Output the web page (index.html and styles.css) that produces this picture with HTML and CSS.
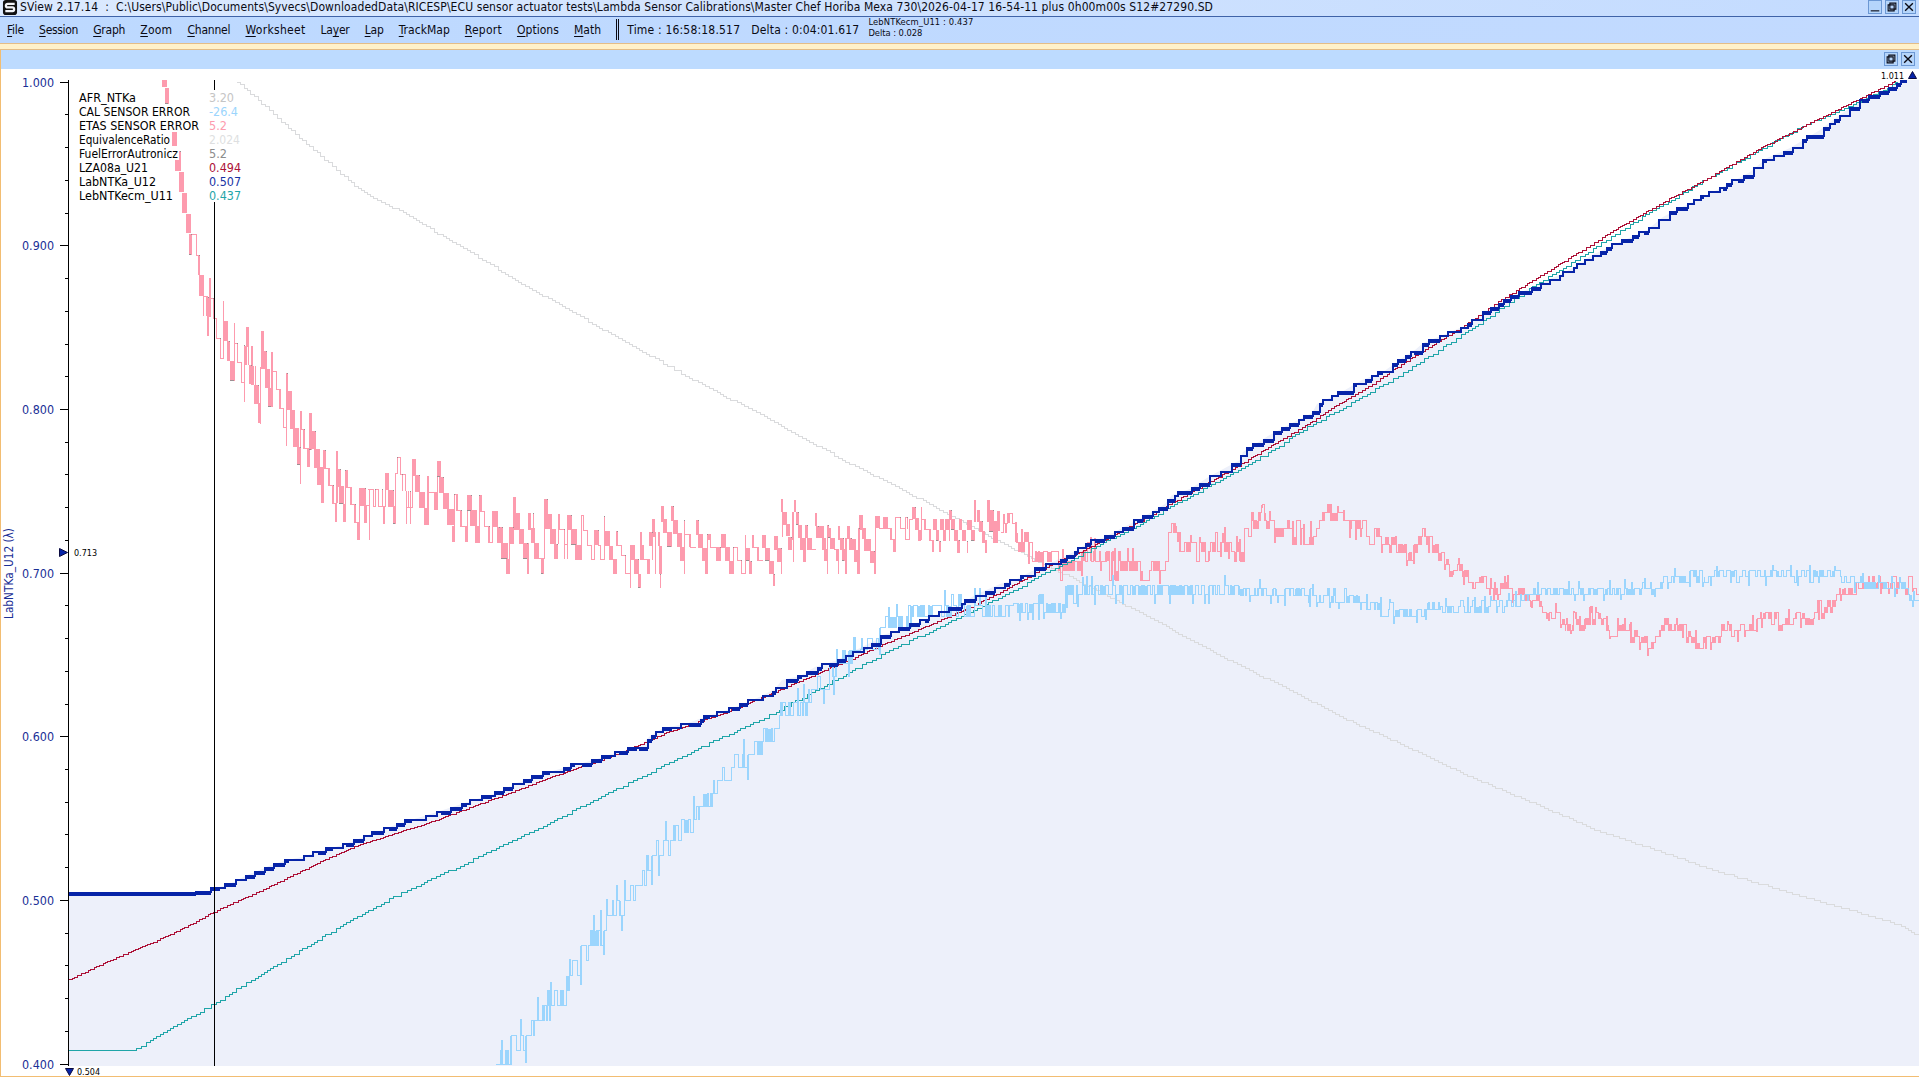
FILE: index.html
```html
<!DOCTYPE html>
<html lang="en">
<head>
<meta charset="utf-8">
<title>SView 2.17.14</title>
<link rel="stylesheet" href="styles.css">
</head>
<body>
<div class="app">
  <header class="titlebar">
    <svg class="logo" viewBox="0 0 16 16"><rect x="0.5" y="0" width="15" height="16" rx="3" fill="#111"/><path d="M13 4.2H5.6Q3.6 4.2 3.6 6T5.6 7.9H10.6Q12.4 7.9 12.4 9.8T10.6 11.8H3" fill="none" stroke="#f2f4f8" stroke-width="2.4"/></svg>
    <span class="title" data-width="1193">SView 2.17.14 &nbsp;: &nbsp;C:\Users\Public\Documents\Syvecs\DownloadedData\RICESP\ECU sensor actuator tests\Lambda Sensor Calibrations\Master Chef Horiba Mexa 730\2026-04-17 16-54-11 plus 0h00m00s S12#27290.SD</span>
    <div class="buttons">
      <svg class="btn" viewBox="0 0 14 14"><path d="M2 11.5H12"/></svg>
      <svg class="btn" viewBox="0 0 14 14"><path d="M4.5 2.5H11.5V9.5H4.5ZM2.5 4.5H9.5V11.5H2.5Z"/></svg>
      <svg class="btn" viewBox="0 0 14 14"><path class="cross" d="M2.5 2.5L11.5 11.5M11.5 2.5L2.5 11.5"/></svg>
    </div>
  </header>
  <nav class="menubar">
    <span class="item" data-width="17"><u>F</u>ile</span>
    <span class="item" data-width="39"><u>S</u>ession</span>
    <span class="item" data-width="32"><u>G</u>raph</span>
    <span class="item" data-width="32"><u>Z</u>oom</span>
    <span class="item" data-width="43"><u>C</u>hannel</span>
    <span class="item" data-width="60"><u>W</u>orksheet</span>
    <span class="item" data-width="29"><span>La</span><u>y</u>er</span>
    <span class="item" data-width="19"><u>L</u>ap</span>
    <span class="item" data-width="51"><u>T</u>rackMap</span>
    <span class="item" data-width="37"><u>R</u>eport</span>
    <span class="item" data-width="42"><u>O</u>ptions</span>
    <span class="item" data-width="27"><u>M</u>ath</span>
    <span class="divider"></span>
    <span class="readout" data-width="113">Time : 16:58:18.517</span>
    <span class="readout" data-width="108">Delta : 0:04:01.617</span>
    <span class="small"><span data-width="105">LebNTKecm_U11 : 0.437</span><span data-width="54">Delta : 0.028</span></span>
  </nav>
  <div class="rule"></div>
  <main class="panel">
    <div class="panelbar">
      <svg class="btn" viewBox="0 0 14 14"><path d="M4.5 2.5H11.5V9.5H4.5ZM2.5 4.5H9.5V11.5H2.5Z"/></svg>
      <svg class="btn" viewBox="0 0 14 14"><path class="cross" d="M2.5 2.5L11.5 11.5M11.5 2.5L2.5 11.5"/></svg>
    </div>
    <svg class="chart" id="chart" viewBox="1 69 1918 1007"></svg>
  </main>
</div>
<script src="chart.js"></script>
</body>
</html>
```
FILE: styles.css
```css
* { box-sizing: border-box; }
body { margin: 0; background: #fff; color: #0a0a14; font: 12px/14px "DejaVu Sans Condensed", "DejaVu Sans", sans-serif; font-stretch: condensed; }
.app { display: flex; flex-direction: column; width: 1919px; height: 1077px; overflow: hidden; }
.titlebar { display: flex; align-items: flex-start; height: 17px; padding: 0 3px 0 2px; border-bottom: 1px solid #3f63a8; background: linear-gradient(90deg, #dceaff, #cfe2fe 50%, #c3dbff); white-space: nowrap; }
.logo { width: 16px; height: 15px; flex: none; }
.title { margin-left: 2px; }
.buttons { display: flex; gap: 3px; margin-left: auto; }
.btn { width: 14px; height: 14px; flex: none; border: 1px solid #6c98d4; background: #b5d5fb; fill: none; stroke: #0a0a14; stroke-width: 1.3; }
.btn .cross { stroke-width: 1.6; }
.menubar { display: flex; height: 26px; padding: 6px 0 0 7px; gap: 15.1px; background: linear-gradient(90deg, #bdd9ff, #c2daff); white-space: nowrap; }
.item, .readout, .title { flex: none; }
.item u { text-underline-offset: 2px; }
.divider { width: 3px; height: 21px; margin-top: -4px; border: solid #0a0a14; border-width: 0 1px; }
.readout { margin-left: -7px; }
.readout + .readout { margin-left: -4px; }
.small { display: flex; flex-direction: column; margin: -6px 0 0 -6px; font-size: 9.3px; line-height: 10.5px; }
.small span { align-self: flex-start; }
[data-width] { display: inline-block; }
.rule { height: 7px; border: solid #e4bd87; border-width: 1px 0; background: #fff1c9; }
.panel { display: flex; flex-direction: column; flex: 1; border: solid #f2bd72; border-width: 0 0 1px 1px; }
.panelbar { display: flex; justify-content: flex-end; gap: 3px; height: 19px; padding: 2px 4px 0; background: #bddbff; }
.chart { display: block; width: 1918px; height: 1007px; }
.label { font: 12px "DejaVu Sans Condensed", "DejaVu Sans", sans-serif; font-stretch: condensed; }
.tiny { font-size: 9.5px; }
.scale { font-size: 13px; fill: #1a2f96; }
```
FILE: chart.js
```js
const NS = "http://www.w3.org/2000/svg";
const chart = document.getElementById("chart");

function el(name, attrs, text) {
  const node = document.createElementNS(NS, name);
  for (const k in attrs) node.setAttribute(k, attrs[k]);
  if (text) node.textContent = text;
  chart.appendChild(node);
  return node;
}
let seed = 7;
const rnd = () => (seed = (seed * 16807) % 2147483647) / 2147483647;
const parse = s => s.trim().split(/\s+/).map(p => p.split(",").map(Number));
// Points recorded on a 3x grid, relative to a region's origin
const region = (ox, oy, s) => parse(s).map(([x, y]) => [ox + x / 3, oy + y / 3]);

function at(pts, x) {
  for (let i = 1; i < pts.length; i++) {
    if (x <= pts[i][0]) {
      const [a, b] = pts[i - 1], [c, d] = pts[i];
      return b + (d - b) * (x - a) / (c - a || 1);
    }
  }
  return pts[pts.length - 1][1];
}

function staircase(pts, q, hold) {
  const end = pts[pts.length - 1][0];
  let x = pts[0][0], y = Math.round(at(pts, x) / q) * q, d = `M${x} ${y + .5}`;
  while (x < end) {
    x = Math.min(end, x + hold());
    const n = Math.round(at(pts, x) / q) * q;
    d += `H${x + .5}`;
    if (n !== y) d += `V${n + .5}`;
    y = n;
  }
  return d;
}

const navy = parse(`69,894 192,894 208,892 210,890 223,886 234,882 245,876 260,870 271,865 287,860 302,857 345,844 395,825 440,811 480,798 500,792 514,784 545,773 567,767 594,760 615,753 640,746 650,736 663,728 685,724 708,716 733,708 757,698 775,689 782,680 800,676 815,667 838,660 847,654 860,648 876,640 883,635 905,628 933,616 960,605 975,595 1000,584 1017,579 1030,572 1048,564 1068,555 1088,543 1105,537 1128,525 1143,517 1165,504 1172,495 1190,489 1210,476 1240,460 1243,452 1268,436 1290,424 1312,413 1317,404 1340,393 1362,380 1383,372 1405,356 1415,350 1423,343 1448,333 1467,325 1483,313 1503,301 1530,288 1557,276 1582,263 1590,256 1620,242 1647,230 1663,217 1680,208 1717,190 1750,172 1767,158 1790,148 1820,130 1837,117 1863,99 1888,88 1902,80`);
const red = parse(`69,979 110,960 150,943 185,927 214,911 265,888 323,860 355,846 379,838 435,820 500,796 550,777 600,760 640,744 667,732 717,715 767,695 817,673 850,659 883,644 933,623 967,608 1000,592 1043,568 1100,542 1143,519 1167,505 1200,487 1240,464 1310,422 1333,407 1367,387 1407,360 1460,328 1503,298 1567,259 1610,232 1657,205 1703,180 1760,148 1800,127 1850,103 1895,80`);
const teal = parse(`69,1049 135,1049 146,1042 167,1030 214,1003 250,980 290,956 323,936 350,920 400,893 450,870 500,846 543,825 590,802 643,775 700,747 767,716 802,697 858,667 900,645 953,620 1000,597 1050,570 1073,558 1150,518 1200,490 1233,472 1267,453 1310,425 1343,407 1390,380 1413,366 1450,342 1483,320 1507,303 1535,285 1567,265 1600,243 1633,222 1667,202 1700,182 1760,149 1800,127 1850,105 1888,88 1897,81`);
const ratio = parse(`237,81 263,105 300,138 340,173 357,188 373,197 407,215 437,233 473,254 507,275 540,294 600,328 661,362 710,389 759,414 843,460 900,489 950,515 1000,542 1060,572 1100,592 1227,659 1346,719 1469,776 1591,828 1713,870 1836,906 1885,920 1900,925 1919,936`);

// Area under the bold trace
el("path", { d: `M69 894${navy.map(p => "L" + p).join("")}L1919 80V1066H69Z`, fill: "#edf0fa" });

const line = (d, stroke, w = 1) => el("path", { d, stroke, "stroke-width": w, fill: "none", "shape-rendering": "crispEdges" });
line(staircase(ratio, 2, () => 3 + Math.floor(rnd() * 2)), "#dadbdd");

// ETAS error: solid excursions as x0 x1 y0 y1
const barsA = `66 80 30 50;76 89 54 101;96 111 186 227;105 117 270 302;117 123 243 302;117 131 306 365;126 140 369 428;138 152 433 491;147 155 491 554;155 170 492 495;168 171 492 557;168 179 555 558;174 180 555 614;177 191 614 677;189 192 677 738;189 203 678 681;198 208 680 738;201 207 738 797;207 213 624 741;213 221 684 687;219 222 684 746;222 230 744 747;228 231 744 806;228 242 804 807;240 243 804 866;240 251 864 867;249 252 692 866;252 264 753 812;261 271 812 872;270 285 872 932;282 285 758 932;285 293 819 822;291 294 819 878;291 305 876 879;303 306 876 938;303 314 936 939;312 315 825 996;315 321 828 884;318 327 771 830;324 327 771 886;327 336 886 942;333 339 828 944;339 342 888 944;345 348 888 944;342 357 944 1001;354 363 1000 1061;360 363 890 1061;363 372 783 896;372 381 843 896;375 390 896 953;384 396 953 1010;393 399 845 1010;396 410 903 906;408 411 903 960;408 422 957 960;417 423 957 1016;417 431 1014 1017;429 432 1014 1073;429 440 1071 1074;438 441 908 1127;441 444 908 1019;441 456 963 1019;450 465 1019 1076;459 477 1074 1130;471 482 1130 1185;480 483 1023 1242;483 486 1023 1080;483 495 1077 1080;489 495 1077 1136;489 504 1134 1137;501 510 1134 1190;507 516 1028 1138;513 528 1083 1138;522 540 1137 1193;531 552 1191 1244;543 552 1244 1299;549 558 1140 1196;552 569 1194 1197;564 570 1194 1247;564 581 1245 1248;576 582 1245 1301;576 590 1299 1302;585 591 1299 1355;588 594 1143 1300;588 603 1197 1250;597 612 1249 1304;609 618 1302 1355;615 624 1200 1254;615 618 1200 1304;621 633 1251 1254;630 636 1251 1304;630 647 1302 1305;642 648 1302 1358;642 657 1356 1359;651 660 1356 1410;657 660 1304 1410;657 678 1254 1307;672 681 1304 1358;684 690 1257 1260;687 690 1257 1410;678 690 1305 1308;687 702 1257 1260;699 702 1257 1310;699 708 1308 1311;705 708 1257 1310;705 716 1257 1260;714 717 1257 1310;714 728 1308 1311;726 729 1257 1310;729 735 1308 1362;735 738 1209 1310;735 747 1209 1260;744 762 1260 1310;759 768 1308 1362;765 768 1209 1310;765 774 1209 1212;771 774 1161 1212;771 783 1161 1164;780 783 1161 1214;780 795 1212 1215;786 789 1212 1263;795 798 1212 1263;798 801 1263 1362;804 807 1263 1312;810 813 1263 1362;816 819 1215 1312;816 828 1167 1217;798 820 1311 1314;825 840 1215 1265;837 855 1266 1315;852 864 1315 1365;861 867 1218 1365;864 886 1266 1269;882 894 1266 1320;891 903 1173 1221;891 894 1173 1320;897 912 1221 1270;909 927 1270 1318;921 942 1318 1367;936 945 1367 1415;942 945 1272 1415;942 954 1272 1275;948 954 1272 1322;948 967 1320 1323;960 967 1320 1370;960 978 1368 1371;975 984 1368 1415;981 984 1275 1415;981 996 1275 1323;990 1011 1321 1370;1005 1020 1368 1418;1017 1026 1275 1325;1017 1020 1275 1418;1020 1035 1323 1326;1032 1035 1323 1370;1032 1048 1368 1371;1044 1050 1368 1418;1044 1058 1416 1419;1056 1074 1323 1372;1056 1059 1323 1418;1071 1080 1371 1418`;
const barsB = `0 9 201 249;3 24 249 297;18 30 297 342;27 30 201 342;27 42 201 252;39 48 111 210;45 60 158 208;57 72 206 250;69 84 249 297;81 87 249 342;84 93 160 210;93 105 205 249;99 102 160 206;102 117 249 297;108 130 294 297;123 132 294 342;132 144 117 163;132 135 117 297;135 156 163 208;150 168 208 254;162 174 252 297;174 180 162 210;174 177 162 253;180 192 207 210;192 195 207 297;192 204 252 255;201 204 165 297;204 210 165 210;210 216 165 210;213 231 208 256;225 246 254 300;243 246 165 300;243 252 165 168;249 252 165 212;249 264 210 213;261 264 210 256;261 276 254 257;273 276 254 300;273 285 297 300;282 285 210 300;285 297 210 256;294 303 254 257;300 303 254 300;300 315 297 300;312 315 168 300;315 330 213 257;327 339 257 300;339 351 297 342;348 354 213 257;354 366 255 258;363 366 255 285;363 378 285 288;375 378 285 342;375 392 339 342;390 393 255 384;393 405 255 300;402 417 297 342;414 423 342 384;420 426 217 300;426 432 255 300;429 444 297 300;441 450 297 342;447 459 217 258;456 465 177 230;456 459 217 300;465 468 217 342;474 480 217 258;477 486 258 342;480 483 342 384;483 492 138 185;489 501 177 220;501 516 217 261;513 522 138 183;519 534 180 222;531 546 220 261;540 552 261 302;552 555 180 342;555 570 222 225;567 573 222 261;570 588 261 264;588 597 180 224;594 609 222 264;606 621 264 303;615 624 303 342;621 624 222 342;624 633 222 240;630 633 222 264;630 651 261 264;648 663 261 303;663 678 222 264;675 690 261 303;687 702 303 342;699 702 261 342;699 714 261 264;711 714 261 303;711 726 300 303;723 726 300 342;723 738 339 342;735 738 225 342;738 750 264 303;747 756 303 342;756 762 225 264;759 774 261 264;771 777 261 303;771 788 300 303;786 798 225 265;795 810 264 303;807 822 303 342;819 825 342 378;822 834 228 270;831 846 264 305;843 849 117 157;843 846 264 342;846 849 117 230;849 860 156 195;858 870 193 230;864 876 230 268;876 882 156 240;879 882 240 305;882 888 120 157;888 897 156 195;894 906 195 233;900 912 233 268;909 918 233 305;915 924 195 235;921 936 233 268;933 948 268 271;945 951 160 200;948 957 198 233;957 972 198 235;966 978 235 270;972 984 268 305;981 987 195 235;981 984 235 342;984 993 205 235;990 1005 235 268;1002 1014 268 271;1008 1017 268 305;1014 1020 198 240;1014 1017 268 342;1020 1032 235 270;1026 1035 268 305;1035 1041 235 342;1041 1050 198 237;1047 1056 235 270;1056 1068 237 270;1062 1074 270 305;1071 1077 305 342;1074 1080 205 342;1077 1089 165 210;1086 1098 205 237;1092 1113 237 272;1110 1125 272 308;1122 1128 308 342;1125 1140 168 205;1125 1128 168 342;1137 1150 205 208;1149 1164 172 208;1161 1176 205 208;1170 1176 205 240;1170 1185 237 240;1179 1188 237 275;1185 1188 172 275;1185 1203 172 175;1200 1203 172 208;1200 1218 205 208;1215 1218 172 240;1218 1224 172 175;1221 1224 172 208;1218 1230 237 240;1227 1230 178 240;1227 1238 178 181;1236 1248 142 178;1245 1257 175 210;1254 1263 210 242;1262 1265 142 242;1265 1275 178 181;1272 1278 178 210;1275 1293 208 211;1287 1293 208 243;1290 1300 240 243;1297 1302 240 275;1299 1312 178 211;1309 1318 211 243;1317 1322 243 275;1320 1332 178 211;1329 1338 211 243;1335 1350 178 211;1347 1356 150 180;1347 1350 178 243;1353 1366 178 211;1362 1374 211 243;1371 1380 240 278;1377 1386 178 211;1386 1398 211 243;1401 1415 180 211;1400 1403 243 278;1413 1425 211 243;1422 1428 120 185;1430 1440 150 185;1437 1449 183 215;1446 1455 213 248;1455 1461 240 278;1461 1470 120 185;1467 1482 150 215;1479 1494 183 248;1491 1500 153 213`;
let fills = "", tips = "";
function addBars(s, ox, oy) {
  s.split(";").forEach((b, i) => {
    const [x0, x1, y0, y1] = b.split(" ").map(Number);
    const x = Math.round(ox + x0 / 3), y = Math.round(oy + y0 / 3);
    const w = Math.max(1, Math.round((x1 - x0) / 3)), h = Math.max(1, Math.round((y1 - y0) / 3));
    fills += `M${x} ${y}h${w}v${h}h${-w}z`;
    if (h > 8 && i % 4 === 0) tips += `M${x + w - 1} ${y}h1v1h-1z`;
    if (h > 8 && w > 2 && i % 7 === 1) tips += `M${x} ${y + h - 1}h${w - 1}v1h${1 - w}z`;
  });
}
addBars(barsA, 140, 70);
addBars(barsB, 500, 460);
el("path", { d: fills, fill: "#fd9bae", "shape-rendering": "crispEdges" });
el("path", { d: tips, fill: "#9b8f92", "shape-rendering": "crispEdges" });

// Noisy quantised trace; busy stretches merge into solid blocks
function noisy(pts, amp, solid, spike, quantum) {
  const end = pts[pts.length - 1][0];
  let x = Math.round(pts[0][0]), d = "", y = null;
  while (x < end) {
    const q = quantum(x), c = at(pts, x);
    let n = Math.round((c + (rnd() * 2 - 1) * amp * q) / q) * q;
    if (n === y && rnd() < .6) n += n > c ? -q : q;
    n = Math.min(1064, n);
    d += y === null ? `M${x + .5} ${n + .5}` : `V${n + .5}`;
    y = n;
    const w = 1 + Math.floor(rnd() * 3.4);
    if (rnd() < spike) {
      const far = Math.min(1064, c + (rnd() < .5 ? -1 : 1) * q * 1.6);
      d += `V${Math.round(far) + .5}h1V${y + .5}h1`;
      x += 2;
    }
    if (rnd() < solid) {
      const s = y > c ? -q : q;
      for (let k = 0; k < w; k++) d += `V${Math.min(1064, y + s) + .5}V${y + .5}h1`;
    } else d += `h${w}`;
    x += w;
  }
  return d;
}
const pink = [
  ...region(1000, 460, "0,185 30,190 50,245 90,265 150,285 175,320 200,300 235,310 265,275 300,285 330,310 400,310 493,325 500,255 515,230 540,265 620,280 650,240 690,250 718,285 724,180 750,195 790,175 830,215 900,225 925,240 945,170 1000,170 1030,190 1060,195 1100,225 1150,240 1200,265 1235,285 1250,235 1280,245 1319,275"),
  ...region(1440, 460, "0,280 25,320 45,310 75,350 100,395 115,350 140,370 165,400 190,345 210,395 250,400 285,420 320,450 350,460 380,500 400,480 420,500 440,460 480,475 505,505 550,500 600,540 628,560 650,525 675,490 695,525 705,495 730,505 755,540 800,535 825,545 850,510 900,515 930,500 970,465 1030,480 1060,470 1100,475 1145,440 1170,455 1200,390 1240,385 1280,375 1340,370 1390,370 1420,365 1437,400")];
line(noisy(pink, 1.5, .55, .25, x => x < 1240 ? 9.5 : x < 1440 ? 8 : 6), "#fd9bae");

line(staircase(teal, 2, () => 3 + Math.floor(rnd() * 3)), "#1fa5a8");
line(staircase(red, 1, () => 2 + Math.floor(rnd() * 3)), "#ad1238");

const sky = [
  ...region(480, 800, "45,795 75,790 90,760 130,720 160,675 190,640 225,600 270,545 300,480 335,420 365,400 390,340 440,305 490,230 520,165 560,130 600,95 630,70 645,38 659,25"),
  ...region(500, 460, "600,1020 630,1000 660,950 700,915 740,895 770,855 810,820 850,760 905,740 940,690 1000,640 1030,600 1070,555 1130,545 1150,500 1200,480 1250,457 1300,445 1400,437 1499,435"),
  ...region(1000, 460, "0,438 180,430 190,400 300,387 600,385 780,390 850,400 1030,410 1100,435 1200,460 1230,460 1260,445 1319,438"),
  ...region(1440, 460, "0,445 180,435 260,410 280,395 500,390 650,380 670,355 780,348 950,345 1180,345 1230,365 1380,380 1400,405 1437,440")];
line(noisy(sky, .9, .3, .22, x => x < 680 ? 15 : x < 860 ? 13 : x < 1010 ? 11 : x < 1240 ? 9 : x < 1440 ? 7 : 6), "#9bd5fd");

// Bold trace: 4px levels with a short flicker
let y = 893, d = "M69 893";
for (let x = 69; x < 1902;) {
  const flat = x < 190;
  const w = 3 + Math.floor(rnd() * 9), n = flat ? 893 : Math.round(at(navy, x) / 4) * 4, dither = flat || rnd() < .6;
  d += `V${n}`;
  if (dither) for (let k = 0; k < w; k++) d += `v3v-3h1`;
  else d += `h${w}`;
  x += w; y = n;
}
line(d, "#0724a8", 2);
// The plot ends at its upper edge
el("rect", { x: 69, y: 70, width: 1850, height: 10, fill: "#fff" });

// Cursor and axis
line("M214.5 80V1066", "#000");
let axis = "M68.5 80V1066";
for (let i = 0; i <= 30; i++) {
  const yy = Math.round(81.7 + i * 32.73) + .5;
  axis += `M${i % 5 ? 65 : 60} ${yy}H69`;
}
line(axis, "#000");
for (let i = 0; i <= 6; i++)
  el("text", { x: 22, y: Math.round(81.7 + i * 163.65) + 5, class: "label scale", textLength: 32, lengthAdjust: "spacingAndGlyphs" }, (1 - i / 10).toFixed(3));

const legend = [["AFR_NTKa", "3.20", "#c5c5c5", 57, 25], ["CAL SENSOR ERROR", "-26.4", "#9bd5fd", 111, 29], ["ETAS SENSOR ERROR", "5.2", "#fd9bae", 120, 18], ["EquivalenceRatio", "2.024", "#dedfe1", 91, 31], ["FuelErrorAutronicz", "5.2", "#8c8c8c", 99, 18], ["LZA08a_U21", "0.494", "#ad1238", 69, 32], ["LabNTKa_U12", "0.507", "#1732a4", 77, 32], ["LebNTKecm_U11", "0.437", "#1fa5a8", 94, 32]];
legend.forEach(([, , , w], i) => {
  el("rect", { x: 78, y: 90 + i * 14, width: w + 2, height: 14, fill: "#fff" });
  el("rect", { x: 208, y: 90 + i * 14, width: 33, height: 14, fill: "#fff" });
});
legend.forEach(([name, value, color, w, vw], i) => {
  const base = 102 + i * 14;
  el("text", { x: 79, y: base, class: "label", textLength: w, lengthAdjust: "spacingAndGlyphs" }, name);
  el("text", { x: 209, y: base, class: "label", fill: color, textLength: vw, lengthAdjust: "spacingAndGlyphs" }, value);
});
el("text", { x: 0, y: 0, transform: "translate(13 619) rotate(-90)", class: "label", fill: "#1a2f96", textLength: 91, lengthAdjust: "spacingAndGlyphs" }, "LabNTKa_U12 (λ)");

const marks = { fill: "#0724a8", stroke: "#0a0a40", "stroke-width": 1 };
el("path", { ...marks, d: "M59.5 548.5L67.5 552.5L59.5 556.5Z" });
el("path", { ...marks, d: "M65.5 1068.5H73.5L69.5 1075.5Z" });
el("path", { ...marks, d: "M1908.5 78.5H1916.5L1912.5 71.5Z" });
[[74, 556, "0.713"], [77, 1075, "0.504"], [1881, 79, "1.011"]].forEach(([x, yy, t]) =>
  el("text", { x, y: yy, class: "label tiny", textLength: 23, lengthAdjust: "spacingAndGlyphs" }, t));

document.querySelectorAll("[data-width]").forEach(n => {
  const target = +n.dataset.width;
  n.style.letterSpacing = (target - n.getBoundingClientRect().width) / n.textContent.length + "px";
  n.style.width = target + "px";
});
```
